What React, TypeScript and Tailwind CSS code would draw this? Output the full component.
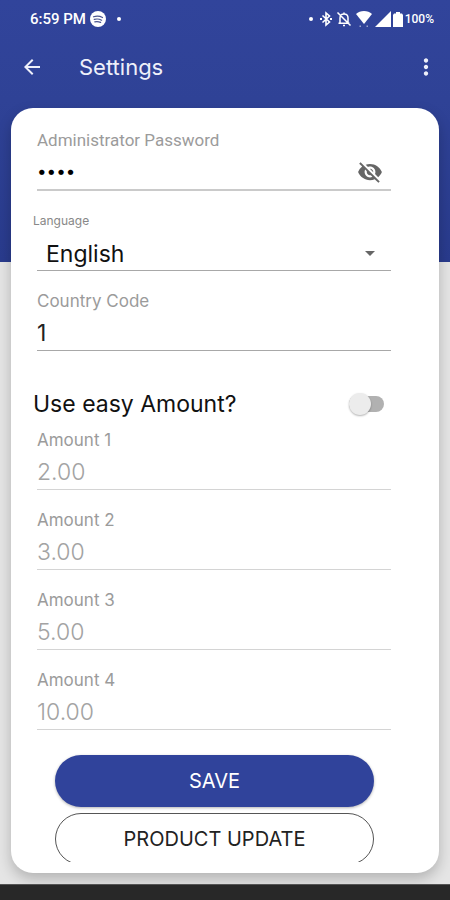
import React, { useState } from 'react';
import { MdArrowBack, MdMoreVert, MdVisibility, MdVisibilityOff, MdArrowDropDown } from 'react-icons/md';

const AMOUNTS = [
  { id: 'amount-1', label: 'Amount 1', value: '2.00' },
  { id: 'amount-2', label: 'Amount 2', value: '3.00' },
  { id: 'amount-3', label: 'Amount 3', value: '5.00' },
  { id: 'amount-4', label: 'Amount 4', value: '10.00' },
];

const StatusBar: React.FC = () => (
  <div className="h-[38px] flex items-center justify-between pl-[30px] pr-4 text-white font-['Roboto',sans-serif]">
    <div className="flex items-center">
      <span className="text-[15px] font-medium">6:59 PM</span>
      <svg viewBox="0 0 16 16" className="w-4 h-4 ml-1" aria-hidden="true">
        <circle cx="8" cy="8" r="8" fill="currentColor" />
        <path d="M3.5 5.8c3-1 6.5-.7 9 .7M4.2 8.4c2.6-.7 5.2-.4 7.4.8M4.8 10.8c2-.5 4-.3 5.8.6" fill="none" stroke="#4a5590" strokeWidth="1.2" strokeLinecap="round" />
      </svg>
      <span className="w-1 h-1 ml-[11px] rounded-full bg-white" />
    </div>
    <div className="flex items-center">
      <span className="w-1 h-1 mr-1 rounded-full bg-white" />
      <svg viewBox="0 0 14 16" className="w-[14px] h-4 ml-[2px]" fill="none" stroke="currentColor" strokeWidth="1.6" aria-hidden="true">
        <path d="M3.5 4.5l7 6.5L7 14V2l3.5 3-7 6.5" />
        <path d="M1 8h2M11 8h2" strokeWidth="2" />
      </svg>
      <svg viewBox="0 0 16 16" className="w-4 h-4 ml-[3px]" fill="none" stroke="currentColor" strokeWidth="1.5" aria-hidden="true">
        <path d="M4 12V7c0-2.4 1.6-4 4-4s4 1.6 4 4v5M2.5 12.2h11M8 1.5V3M7 14.5h2M1.5 1.5l13 13" />
      </svg>
      <svg viewBox="0 0 18 18" className="w-[18px] h-[18px] ml-[3px]" fill="currentColor" aria-hidden="true">
        <path d="M1 4c2-2 5-3 8-3s6 1 8 3L9 14z" />
        <path d="M4.5 15.5h1.5v1.5H4.5zM11.5 15.5H13v1.5h-1.5z" opacity=".5" />
      </svg>
      <svg viewBox="0 0 16 16" className="w-4 h-4 ml-[2px]" fill="currentColor" aria-hidden="true">
        <path d="M16 0v16H0z" />
      </svg>
      <svg viewBox="0 0 10 16" className="w-[10px] h-4 ml-[2px]" fill="currentColor" aria-hidden="true">
        <path d="M3 1h4v1.5h2L10 4v12H0V4l1-1.5h2z" />
      </svg>
      <span className="ml-[2px] text-xs font-medium">100%</span>
    </div>
  </div>
);

interface FieldProps {
  id: string;
  label: string;
  value: string;
  onChange: (value: string) => void;
  disabled?: boolean;
}

const Field: React.FC<FieldProps> = ({ id, label, value, onChange, disabled }) => (
  <div className="flex flex-col">
    <label htmlFor={id} className="h-5 text-[17px] leading-5 text-[#9b9b9b]">{label}</label>
    <input
      id={id}
      type="text"
      inputMode="decimal"
      value={value}
      disabled={disabled}
      onChange={(e) => onChange(e.target.value)}
      className="w-full h-10 pt-1 border-b border-[#a8a8a8] text-[23px] text-[#222] outline-none disabled:border-[#d4d4d4] disabled:font-light disabled:text-[#a3a3a3]"
    />
  </div>
);

export default function App() {
  const [password, setPassword] = useState('1234');
  const [showPassword, setShowPassword] = useState(false);
  const [language, setLanguage] = useState('English');
  const [countryCode, setCountryCode] = useState('1');
  const [easyAmount, setEasyAmount] = useState(false);
  const [amounts, setAmounts] = useState(AMOUNTS);

  const updateAmount = (id: string, value: string) => {
    setAmounts(prev => prev.map(a => (a.id === id ? { ...a, value } : a)));
  };

  return (
    <div className="h-screen flex flex-col bg-[#282828] font-['Inter',sans-serif]">
      <div className="flex-1 min-h-0 flex flex-col overflow-hidden pb-[11px] bg-[linear-gradient(#31449b_0,#2f4296_100px,#293b8d_262px,#e5e5e5_262px)]">
        <StatusBar />

        {/* App bar */}
        <header className="h-[58px] mb-3 flex items-center pl-5 pr-[11px] text-[#eef0fa]">
          <button type="button" aria-label="Back">
            <MdArrowBack className="w-6 h-6" />
          </button>
          <h1 className="flex-1 ml-[35px] text-[22px]">Settings</h1>
          <button type="button" aria-label="More options">
            <MdMoreVert className="w-[26px] h-[26px]" />
          </button>
        </header>

        <main className="flex-1 min-h-0 flex flex-col mx-[11px] pt-[22px] pb-[11px] rounded-[22px] bg-white shadow-[0_6px_14px_rgba(0,0,0,0.22)]">
          <form className="flex-1 min-h-0 overflow-hidden pl-[26px] pr-12" onSubmit={(e) => e.preventDefault()}>
            <div className="flex flex-col gap-5">
              <div className="flex flex-col">
                <label htmlFor="password" className="h-5 text-[17px] leading-5 text-[#9b9b9b] font-['Roboto',sans-serif]">Administrator Password</label>
                <div className="h-[41px] flex items-center border-b-2 border-[#cacaca]">
                  <input
                    id="password"
                    type={showPassword ? 'text' : 'password'}
                    value={password}
                    onChange={(e) => setPassword(e.target.value)}
                    className="flex-1 min-w-0 pt-1 text-[17px] text-black outline-none"
                  />
                  <button
                    type="button"
                    aria-label="Toggle password visibility"
                    onClick={() => setShowPassword(!showPassword)}
                    className="mr-2 pt-1 text-[#666]"
                  >
                    {showPassword ? <MdVisibility className="w-[26px] h-[26px]" /> : <MdVisibilityOff className="w-[26px] h-[26px]" />}
                  </button>
                </div>
              </div>

              <div className="flex flex-col">
                <label htmlFor="language" className="h-5 -ml-1 text-xs leading-5 text-[#888]">Language</label>
                <div className="grid items-center h-10 border-b border-[#a8a8a8]">
                  <select
                    id="language"
                    value={language}
                    onChange={(e) => setLanguage(e.target.value)}
                    className="col-start-1 row-start-1 w-full h-9 pl-[9px] pt-1 appearance-none text-[23px] text-[#111] outline-none"
                  >
                    <option>English</option>
                    <option>Español</option>
                    <option>Français</option>
                  </select>
                  <MdArrowDropDown className="col-start-1 row-start-1 justify-self-end w-6 h-6 mr-[9px] mt-1 text-[#666] pointer-events-none" />
                </div>
              </div>

              <Field id="country-code" label="Country Code" value={countryCode} onChange={setCountryCode} />
            </div>

            <div className="flex items-center justify-between h-9 mt-[35px] mb-2 -ml-1 pr-[7px]">
              <label htmlFor="easy-amount" className="text-[23px] text-[#111]">Use easy Amount?</label>
              <input
                id="easy-amount"
                type="checkbox"
                role="switch"
                checked={easyAmount}
                onChange={(e) => setEasyAmount(e.target.checked)}
                className="appearance-none flex items-center w-[35px] h-4 rounded-full bg-[#b1b1b1] before:w-[22px] before:h-[22px] before:shrink-0 before:rounded-full before:bg-[#ececec] before:shadow-[0_1px_2px_rgba(0,0,0,0.3)] checked:justify-end checked:bg-[#8e9bd8] checked:before:bg-[#30439b]"
              />
            </div>

            <div className="flex flex-col gap-5">
              {amounts.map((amount) => (
                <Field
                  key={amount.id}
                  id={amount.id}
                  label={amount.label}
                  value={amount.value}
                  disabled={!easyAmount}
                  onChange={(value) => updateAmount(amount.id, value)}
                />
              ))}
            </div>

            <div className="flex flex-col gap-[6px] mt-[25px] ml-[18px] mr-[17px]">
              <button type="submit" className="h-[52px] rounded-full bg-[#30439b] text-[20px] text-white shadow-[0_1px_3px_rgba(0,0,0,0.3)]">
                SAVE
              </button>
              <button type="button" className="h-[52px] rounded-full border border-[#555] bg-white text-[20px] text-[#222]">
                PRODUCT UPDATE
              </button>
            </div>
          </form>
        </main>
      </div>

      {/* System navigation strip */}
      <div className="h-4 border-t border-[#555]" />
    </div>
  );
}
